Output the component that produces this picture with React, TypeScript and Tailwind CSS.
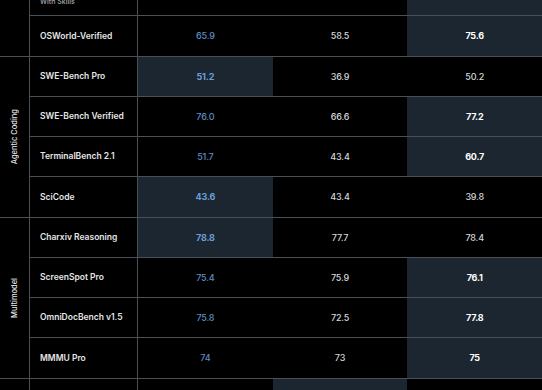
type Row = {
  name: string;
  sub?: string;
  values: string[];
  best: number;
};

type Group = {
  label: string;
  rows: Row[];
};

const groups: Group[] = [
  {
    label: '',
    rows: [
      { name: 'HLE', sub: 'With Skills', values: ['74.0', '72.4', '74.6'], best: 2 },
      { name: 'OSWorld-Verified', values: ['65.9', '58.5', '75.6'], best: 2 },
    ],
  },
  {
    label: 'Agentic Coding',
    rows: [
      { name: 'SWE-Bench Pro', values: ['51.2', '36.9', '50.2'], best: 0 },
      { name: 'SWE-Bench Verified', values: ['76.0', '66.6', '77.2'], best: 2 },
      { name: 'TerminalBench 2.1', values: ['51.7', '43.4', '60.7'], best: 2 },
      { name: 'SciCode', values: ['43.6', '43.4', '39.8'], best: 0 },
    ],
  },
  {
    label: 'Multimodel',
    rows: [
      { name: 'Charxiv Reasoning', values: ['78.8', '77.7', '78.4'], best: 0 },
      { name: 'ScreenSpot Pro', values: ['75.4', '75.9', '76.1'], best: 2 },
      { name: 'OmniDocBench v1.5', values: ['75.8', '72.5', '77.8'], best: 2 },
      { name: 'MMMU Pro', values: ['74', '73', '75'], best: 2 },
    ],
  },
  {
    label: 'Knowledge',
    rows: [
      { name: 'GPQA Diamond', values: ['86.1', '87.3', '85.4'], best: 1 },
      { name: 'MMLU Pro', values: ['84.0', '83.2', '83.9'], best: 0 },
    ],
  },
];

function ValueCell({ value, col, best }: { value: string; col: number; best: boolean }) {
  const color =
    col === 0
      ? best
        ? 'text-[#6a9fd6] font-bold'
        : 'text-[#5d8fc4] font-medium'
      : best
        ? 'text-white font-bold'
        : 'text-[#d4d6d8] font-medium';
  return (
    <div
      className={`flex flex-1 items-center justify-center text-[9px] tracking-[-0.02em] ${color} ${
        best ? 'bg-[#1b2630]' : ''
      }`}
    >
      {value}
    </div>
  );
}

export default function App() {
  return (
    <div
      className="h-[390px] w-[542px] overflow-hidden bg-black"
      style={{ fontFamily: 'Inter, "Open Sans", sans-serif' }}
    >
      <div className="mt-[-24px] flex flex-col">
        {groups.map((g) => (
          <div key={g.label || 'top'} className="flex border-b border-[#4b5056]">
            {/* Group label */}
            <div className="flex w-[30px] shrink-0 items-center justify-center border-r border-[#4b5056]">
              <span className="rotate-180 text-[7.5px] font-medium text-[#e8e8e8] [writing-mode:vertical-rl]">
                {g.label}
              </span>
            </div>

            {/* Rows */}
            <div className="flex flex-1 flex-col divide-y divide-[#4b5056]">
              {g.rows.map((r) => (
                <div key={r.name} className="flex h-[40px]">
                  <div className="flex w-[108px] shrink-0 flex-col justify-center border-r border-[#4b5056] pl-[10px]">
                    <span className="whitespace-nowrap text-[8.5px] font-semibold leading-[11px] text-[#e6e7e8]">
                      {r.name}
                    </span>
                    {r.sub && (
                      <span className="whitespace-nowrap text-[7px] font-medium leading-[9px] text-[#a9abae]">
                        {r.sub}
                      </span>
                    )}
                  </div>
                  {r.values.map((v, i) => (
                    <ValueCell key={i} value={v} col={i} best={i === r.best} />
                  ))}
                </div>
              ))}
            </div>
          </div>
        ))}
      </div>
    </div>
  );
}
